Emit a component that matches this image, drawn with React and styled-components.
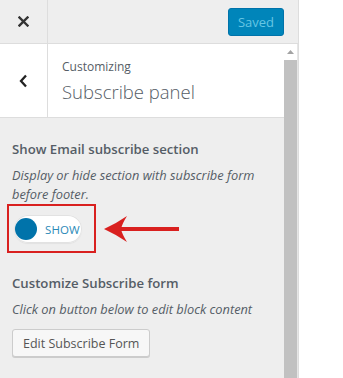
import React from 'react';
import styled, { createGlobalStyle } from 'styled-components';

const GlobalStyle = createGlobalStyle`
  html, body {
    margin: 0;
    padding: 0;
    background: #ffffff;
  }
  body {
    font-family: 'Open Sans', 'Noto Sans', sans-serif;
    color: #555d66;
  }
`;

const Page = styled.div`
  display: flex;
  width: 343px;
  height: 378px;
  overflow: hidden;
  background: #ffffff;
`;

const Sidebar = styled.div`
  width: 298px;
  height: 378px;
  display: flex;
  flex-direction: column;
  background: #eeeeee;
  border-right: 1px solid #dddddd;
`;

const Header = styled.div`
  display: flex;
  align-items: center;
  justify-content: space-between;
  height: 43px;
  flex-shrink: 0;
  border-bottom: 1px solid #dddddd;
  padding-right: 14px;
`;

const IconCell = styled.div`
  width: 47px;
  height: 100%;
  display: flex;
  align-items: center;
  justify-content: center;
  border-right: 1px solid #dddddd;
  flex-shrink: 0;
`;

const SaveButton = styled.button`
  width: 56px;
  height: 28px;
  border: 1px solid #0073aa;
  border-radius: 3px;
  background: #0085ba;
  color: #66c6e4;
  font-family: inherit;
  font-size: 13px;
  padding: 0;
`;

const Main = styled.div`
  flex: 1;
  display: flex;
  min-height: 0;
`;

const Content = styled.div`
  flex: 1;
  display: flex;
  flex-direction: column;
`;

const SectionHead = styled.div`
  display: flex;
  height: 73px;
  background: #ffffff;
  border-bottom: 1px solid #dddddd;
`;

const TitleBlock = styled.div`
  padding: 14px 0 0 14px;
`;

const Eyebrow = styled.div`
  font-size: 12px;
  line-height: 18px;
`;

const PanelTitle = styled.div`
  font-size: 18.5px;
  font-weight: 300;
  line-height: 28px;
  margin-top: 2px;
`;

const Body = styled.div`
  padding: 21px 12px 0 12px;
  display: flex;
  flex-direction: column;
  align-items: flex-start;
`;

const ControlTitle = styled.div`
  font-size: 13.2px;
  font-weight: 600;
  line-height: 20px;
  margin-top: ${({ gap }) => gap || 0}px;
`;

const Description = styled.div`
  font-size: 12.8px;
  font-style: italic;
  line-height: 19px;
  margin-top: 7px;
`;

const ToggleRow = styled.div`
  display: flex;
  align-items: center;
  gap: 8px;
  margin-left: -5px;
`;

const Highlight = styled.div`
  border: 2px solid #d9201f;
  padding: 9px 12px 8px 5px;
`;

const Toggle = styled.div`
  width: 68px;
  height: 28px;
  box-sizing: border-box;
  border-radius: 14px;
  background: #ffffff;
  box-shadow: inset 0 0 0 1px #e2e2e2, 0 1px 1px rgba(0, 0, 0, 0.05);
  display: flex;
  align-items: center;
  padding-left: 1px;
  gap: 8px;
`;

const Knob = styled.span`
  width: 22px;
  height: 22px;
  border-radius: 50%;
  background: #0073aa;
`;

const ToggleLabel = styled.span`
  font-size: 11.5px;
  color: #2a8ab8;
  letter-spacing: 0.1px;
`;

const EditButton = styled.button`
  margin-top: 10px;
  height: 28px;
  padding: 0 10px;
  border: 1px solid #cccccc;
  border-radius: 3px;
  background: #f7f7f7;
  box-shadow: 0 1px 0 #cccccc;
  color: #555555;
  font-family: inherit;
  font-size: 12.5px;
`;

const Scrollbar = styled.div`
  width: 13px;
  display: flex;
  flex-direction: column;
  align-items: center;
  background: #ffffff;
  border-right: 1px solid #e6e6e6;
`;

const ScrollArrow = styled.div`
  height: 16px;
  display: flex;
  align-items: center;
  justify-content: center;
`;

const Thumb = styled.div`
  flex: 1;
  width: 100%;
  background: #c1c1c1;
`;

const CloseIcon = () => (
  <svg width="11" height="11" viewBox="0 0 11 11">
    <path d="M1.5 1.5 L9.5 9.5 M9.5 1.5 L1.5 9.5" stroke="#333" strokeWidth="2.4" strokeLinecap="square" fill="none" />
  </svg>
);

const BackIcon = () => (
  <svg width="9" height="14" viewBox="0 0 9 14">
    <path d="M7 1.5 L2 7 L7 12.5" stroke="#222" strokeWidth="2.3" fill="none" />
  </svg>
);

const Arrow = () => (
  <svg width="76" height="26" viewBox="0 0 76 26">
    <rect x="15" y="11" width="60" height="4" fill="#d9201f" />
    <path d="M0 13 Q13 7 23 0 Q18 8 17 13 Q18 18 23 26 Q13 19 0 13 Z" fill="#d9201f" />
  </svg>
);

const App = () => {
  return (
    <>
      <GlobalStyle />
      <Page>
        <Sidebar>
          <Header>
            <IconCell>
              <CloseIcon />
            </IconCell>
            <SaveButton>Saved</SaveButton>
          </Header>
          <Main>
            <Content>
              <SectionHead>
                <IconCell>
                  <BackIcon />
                </IconCell>
                <TitleBlock>
                  <Eyebrow>Customizing</Eyebrow>
                  <PanelTitle>Subscribe panel</PanelTitle>
                </TitleBlock>
              </SectionHead>
              <Body>
                <ControlTitle>Show Email subscribe section</ControlTitle>
                <Description>
                  Display or hide section with subscribe form
                  <br />
                  before footer.
                </Description>
                <ToggleRow>
                  <Highlight>
                    <Toggle>
                      <Knob />
                      <ToggleLabel>SHOW</ToggleLabel>
                    </Toggle>
                  </Highlight>
                  <Arrow />
                </ToggleRow>
                <ControlTitle gap={20}>Customize Subscribe form</ControlTitle>
                <Description>Click on button below to edit block content</Description>
                <EditButton>Edit Subscribe Form</EditButton>
              </Body>
            </Content>
            <Scrollbar>
              <ScrollArrow>
                <svg width="7" height="4" viewBox="0 0 7 4">
                  <path d="M0 4 L3.5 0 L7 4 Z" fill="#a3a3a3" />
                </svg>
              </ScrollArrow>
              <Thumb />
            </Scrollbar>
          </Main>
        </Sidebar>
      </Page>
    </>
  );
};

export default App;
